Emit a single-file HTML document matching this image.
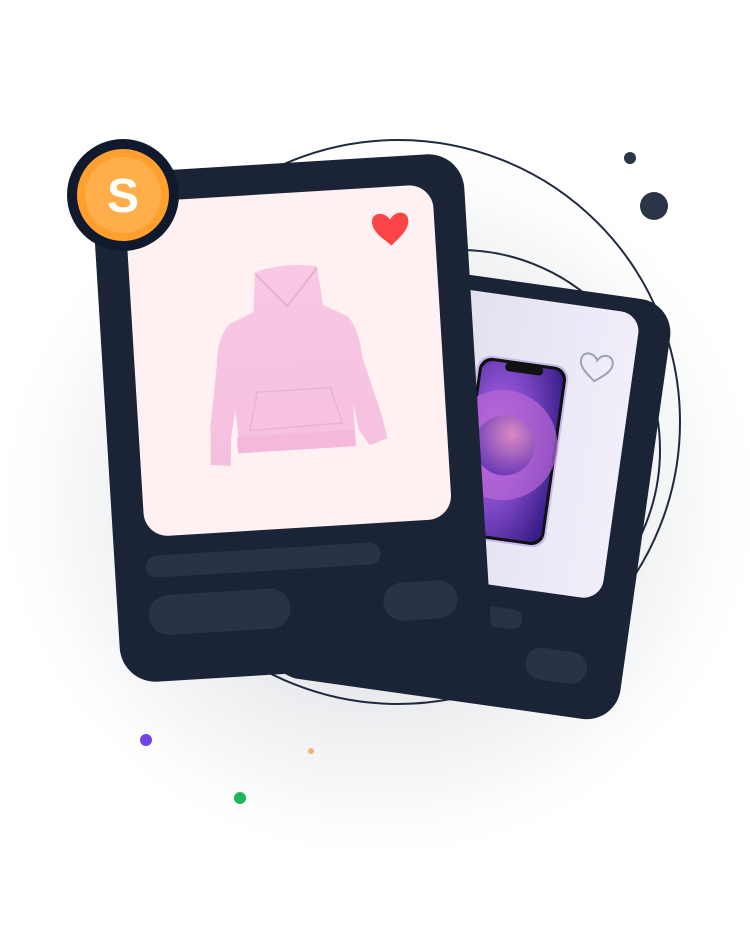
<!DOCTYPE html>
<html><head><meta charset="utf-8"><style>
html,body{margin:0;padding:0;background:#fff;}
svg{display:block}
</style></head><body>
<svg width="750" height="932" viewBox="0 0 750 932" xmlns="http://www.w3.org/2000/svg">
<defs>
<radialGradient id="glow" cx="0.5" cy="0.5" r="0.5">
<stop offset="0" stop-color="#c9ccd3"/>
<stop offset="0.45" stop-color="#e5e7ea"/>
<stop offset="0.8" stop-color="#f7f8f9"/>
<stop offset="1" stop-color="#ffffff" stop-opacity="0"/>
</radialGradient>
<linearGradient id="backin" x1="0" y1="0" x2="1" y2="0">
<stop offset="0" stop-color="#d9d7e8"/>
<stop offset="1" stop-color="#f1eefa"/>
</linearGradient>
<radialGradient id="ph1" cx="0.3" cy="0.45" r="0.8">
<stop offset="0" stop-color="#c86fd6"/>
<stop offset="0.4" stop-color="#8b4fd0"/>
<stop offset="1" stop-color="#3a1f8a"/>
</radialGradient>
<radialGradient id="ph2" cx="0.6" cy="0.3" r="0.7">
<stop offset="0" stop-color="#d98ac4"/>
<stop offset="1" stop-color="#6c3bb8"/>
</radialGradient>
<linearGradient id="hood" x1="0" y1="0" x2="0" y2="1">
<stop offset="0" stop-color="#f8c8e4"/>
<stop offset="1" stop-color="#f5c0df"/>
</linearGradient>
</defs>

<ellipse cx="380" cy="500" rx="390" ry="370" fill="url(#glow)"/>

<circle cx="398" cy="422" r="282" fill="none" stroke="#1f2a3d" stroke-width="2"/>
<circle cx="460" cy="450" r="200" fill="none" stroke="#1f2a3d" stroke-width="2"/>

<!-- back card -->
<g transform="translate(470 489) rotate(8)">
<rect x="-177" y="-212" width="354" height="424" rx="34" fill="#1b2337"/>
<rect x="-147" y="-197" width="292" height="289" rx="20" fill="url(#backin)"/>
<g transform="translate(36 -43)">
<rect x="-46" y="-92" width="92" height="184" rx="14" fill="#c8b8ec"/>
<rect x="-44" y="-90" width="88" height="180" rx="13" fill="#111"/>
<rect x="-41" y="-87" width="82" height="174" rx="11" fill="url(#ph1)"/>
<circle cx="-10" cy="-5" r="55" fill="#b866d6" opacity="0.7"/>
<circle cx="-8" cy="-5" r="30" fill="url(#ph2)"/>
<rect x="-18" y="-88" width="38" height="9" rx="4" fill="#111"/>
</g>
<path d="M108 -145 c-4 -8 -16 -8 -16 2 c0 8 10 14 16 19 c6 -5 16 -11 16 -19 c0 -10 -12 -10 -16 -2z" fill="none" stroke="#9aa3b5" stroke-width="2"/>
<rect x="-145" y="113" width="215" height="20" rx="10" fill="#283446"/>
<rect x="79" y="147" width="62" height="32" rx="16" fill="#283446"/>
</g>

<!-- front card -->
<g transform="translate(292 418) rotate(-3.5)">
<rect x="-186" y="-255" width="372" height="510" rx="36" fill="#1b2337"/>
<rect x="-154" y="-225" width="308" height="335" rx="24" fill="#fff0f2"/>
<g transform="translate(2 -56)">
<path d="M-30 -92 Q0 -100 32 -94 L36 -55 L60 -42 Q70 -30 72 0 L88 60 L92 82 L74 88 L64 72 L60 45 L60 85 L-56 88 L-58 45 L-64 72 L-66 100 L-86 98 L-84 60 L-74 0 Q-72 -30 -58 -42 L-34 -52 Z" fill="url(#hood)"/>
<path d="M-30 -90 L0 -56 L32 -92" fill="none" stroke="#eab0d2" stroke-width="2"/>
<path d="M-35 28 L38 28 L48 64 L-45 66 Z" fill="none" stroke="#e8b4d3" stroke-width="1.5"/>
<rect x="-58" y="72" width="118" height="16" fill="#f3b8da"/>
</g>
<path d="M110 -192 c-6 -10 -20 -8 -18 4 c2 10 12 16 18 22 c6 -6 16 -12 18 -22 c2 -12 -12 -14 -18 -4z" fill="#fb4447"/>
<rect x="-155" y="129" width="235" height="22" rx="11" fill="#283446"/>
<rect x="-155" y="169" width="142" height="40" rx="20" fill="#283446"/>
<rect x="80" y="171" width="74" height="38" rx="19" fill="#283446"/>
</g>

<!-- badge -->
<circle cx="123" cy="195" r="56" fill="#111a2c"/>
<circle cx="123" cy="195" r="46" fill="#ff9f2e"/>
<circle cx="123" cy="195" r="38" fill="#ffae4a"/>
<text x="123" y="212" text-anchor="middle" font-family="Liberation Sans, sans-serif" font-weight="bold" font-size="48" fill="#fff">S</text>

<circle cx="630" cy="158" r="6" fill="#2a3547"/>
<circle cx="654" cy="206" r="14" fill="#2a3547"/>
<circle cx="146" cy="740" r="6" fill="#6f45e6"/>
<circle cx="240" cy="798" r="6" fill="#1fb65a"/>
<circle cx="311" cy="751" r="3" fill="#efb274"/>
</svg>
</body></html>
